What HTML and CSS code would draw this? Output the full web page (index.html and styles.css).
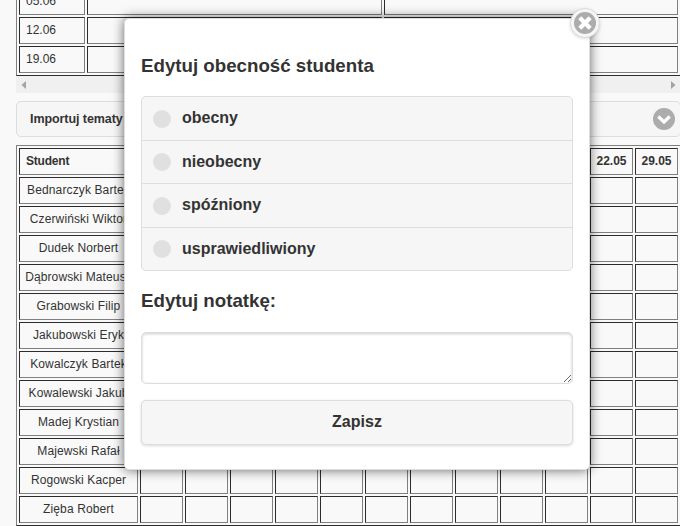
FILE: index.html
```html
<!DOCTYPE html>
<html lang="pl">
<head>
<meta charset="utf-8">
<title>Obecność</title>
<link rel="stylesheet" href="styles.css">
</head>
<body>
<main class="page">
  <div class="scroller">
    <div class="grid topics">
      <div class="cell">05.06</div><div class="cell"></div><div class="cell"></div>
      <div class="cell">12.06</div><div class="cell"></div><div class="cell"></div>
      <div class="cell">19.06</div><div class="cell"></div><div class="cell"></div>
    </div>
    <div class="scrollbar">
      <svg width="5" height="8" viewBox="0 0 5 8"><path d="M5 0V8L0.5 4Z"/></svg>
      <svg width="5" height="8" viewBox="0 0 5 8"><path d="M0 0V8L4.500 4Z"/></svg>
    </div>
  </div>
  <div class="import">
    <span>Importuj tematy</span>
    <svg width="22" height="22" viewBox="0 0 22 22"><circle cx="11" cy="11" r="11" fill="#acacac"/><path d="M5.300 8.500L11 14L16.700 8.500" fill="none" stroke="#fff" stroke-width="3.200"/></svg>
  </div>
  <div class="grid students" id="students"></div>
</main>
<section class="popup">
  <button class="close" aria-label="Zamknij"><svg width="22" height="22" viewBox="0 0 22 22"><circle cx="11" cy="11" r="11" fill="#acacac"/><path d="M5.800 5.800L16.200 16.200M16.200 5.800L5.800 16.200" stroke="#fff" stroke-width="4.300"/></svg></button>
  <h3>Edytuj obecność studenta</h3>
  <div class="options">
    <div class="option"><i></i><span class="raised">obecny</span></div>
    <div class="option"><i></i><span>nieobecny</span></div>
    <div class="option"><i></i><span class="raised">spóźniony</span></div>
    <div class="option"><i></i><span>usprawiedliwiony</span></div>
  </div>
  <h3 class="note">Edytuj notatkę:</h3>
  <textarea></textarea>
  <button class="save">Zapisz</button>
</section>
<script src="script.js"></script>
</body>
</html>
```
FILE: styles.css
```css
* { box-sizing: border-box; }
body {
  margin: 0;
  width: 680px;
  height: 526px;
  overflow: hidden;
  background: #f9f9f9;
  color: #333;
  font-family: "Liberation Sans", Arial, sans-serif;
  position: relative;
}
.page { padding-left: 16px; height: 526px; overflow: hidden; }
.scroller { height: 93px; overflow: hidden; display: flex; flex-direction: column; justify-content: flex-end; }
.grid {
  display: grid;
  gap: 2px;
  padding: 2px;
  border: 1px solid;
  border-color: #808080 #2c2c2c #2c2c2c #808080;
  font-size: 12px;
  flex: none;
}
.topics { width: 680px; grid-template-columns: 66px 295px 294px; }
.students { width: 680px; grid-template-columns: 119px repeat(12, 43px); }
.cell {
  height: 27px;
  border: 1px solid;
  border-color: #2c2c2c #808080 #808080 #2c2c2c;
  line-height: 25px;
  padding: 0 6px;
  white-space: nowrap;
}
.students .cell { padding: 0; text-align: center; letter-spacing: .12px; }
.students .head { font-weight: bold; letter-spacing: 0; }
.students .first { text-align: left; padding-left: 6px; letter-spacing: -.2px; }
.scrollbar {
  flex: none;
  height: 17px;
  background: #f0f0f0;
  display: flex;
  justify-content: space-between;
  align-items: center;
  padding: 0 4px 0 5px;
}
.scrollbar path { fill: #a3a3a3; }
.import {
  margin: 8px 0;
  width: 665px;
  height: 36px;
  border: 1px solid #ddd;
  border-radius: 5px;
  background: #f6f6f6;
  display: flex;
  justify-content: space-between;
  align-items: center;
  padding: 0 5px 0 13px;
  font-size: 12.500px;
  letter-spacing: -.07px;
  font-weight: bold;
}
.popup {
  position: absolute;
  left: 124px;
  top: 18px;
  width: 466px;
  height: 452px;
  padding: 0 16px;
  background: #fff;
  border: 1px solid #ddd;
  border-radius: 5px;
  box-shadow: 0 0 12px rgba(0, 0, 0, .6);
}
h3 { margin: 35px 0 0; font-size: 18.720px; line-height: 24px; }
.options { margin-top: 18px; border: 1px solid #ddd; border-radius: 5px; background: #f6f6f6; height: 175px; display: grid; grid-template-rows: 44px 43px 44px 42px; }
.option { display: flex; align-items: center; gap: 11px; padding-left: 11px; font-size: 16px; font-weight: bold; border-bottom: 1px solid #ddd; }
.option:last-child { border: 0; }
.option i { width: 18px; height: 18px; border-radius: 50%; background: #e0e0e0; }
.raised { padding-bottom: 2px; }
.note { margin-top: 18px; }
textarea {
  display: block;
  width: 100%;
  height: 52px;
  margin: 19px 0 16px;
  border: 1px solid #ddd;
  border-radius: 5px;
  box-shadow: inset 0 1px 3px rgba(0, 0, 0, .2);
  outline: 0;
}
.save {
  display: block;
  width: 100%;
  height: 45px;
  padding: 0 0 2px;
  border: 1px solid #ddd;
  border-radius: 5px;
  background: #f6f6f6;
  box-shadow: 0 1px 3px rgba(0, 0, 0, .15);
  font: bold 16px "Liberation Sans", Arial, sans-serif;
  color: #333;
}
.close {
  position: absolute;
  right: -11px;
  top: -11px;
  width: 30px;
  height: 30px;
  padding: 3px;
  border: 1px solid #ddd;
  border-radius: 50%;
  background: #f6f6f6;
  box-shadow: 0 1px 3px rgba(0, 0, 0, .15);
}
.close svg { display: block; }
```
FILE: script.js
```js
const names = ["Student", "Bednarczyk Bartek", "Czerwiński Wiktor", "Dudek Norbert", "Dąbrowski Mateusz", "Grabowski Filip", "Jakubowski Eryk", "Kowalczyk Bartek", "Kowalewski Jakub", "Madej Krystian", "Majewski Rafał", "Rogowski Kacper", "Zięba Robert"];
const grid = document.getElementById("students");
names.forEach((name, row) => {
  for (let col = 0; col < 13; col++) {
    const cell = document.createElement("div");
    cell.className = "cell" + (row === 0 ? " head" : "") + (row === 0 && col === 0 ? " first" : "");
    if (col === 0) cell.textContent = name;
    else if (row === 0 && col === 11) cell.textContent = "22.05";
    else if (row === 0 && col === 12) cell.textContent = "29.05";
    grid.append(cell);
  }
});
```
